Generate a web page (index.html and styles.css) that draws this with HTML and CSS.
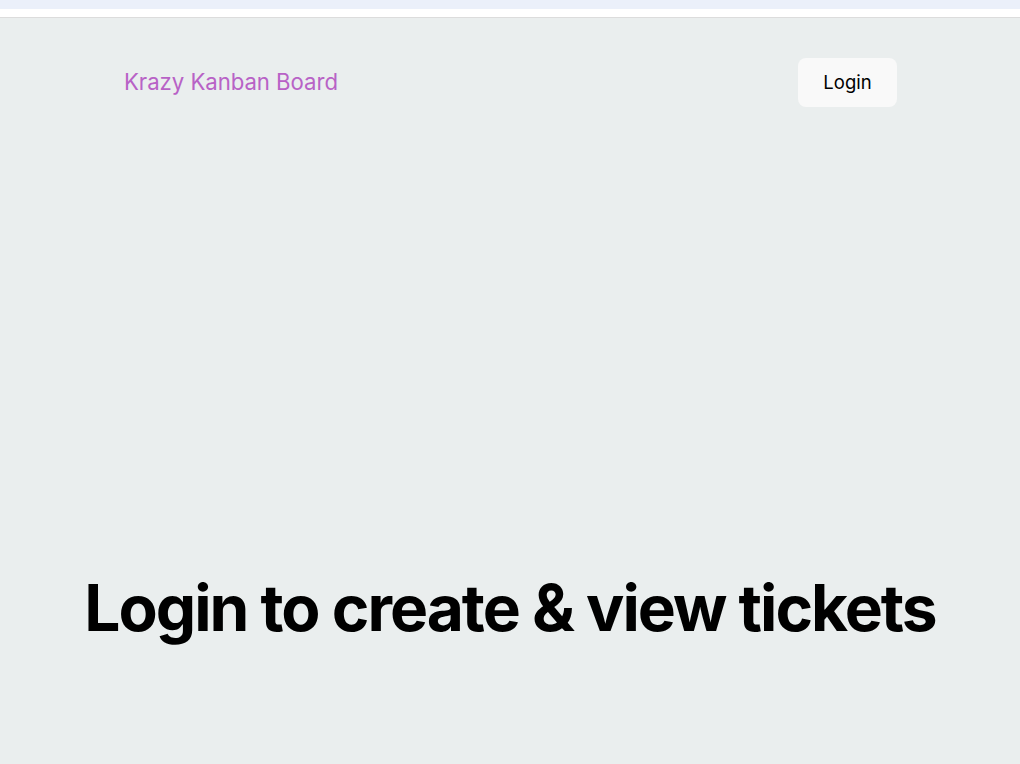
FILE: index.html
```html
<!DOCTYPE html>
<html lang="en">
<head>
<meta charset="utf-8">
<title>Krazy Kanban Board</title>
<link rel="stylesheet" href="styles.css">
</head>
<body>
<div class="topband"></div>
<div class="topwhite"></div>
<main class="page">
  <nav class="nav">
    <h1 class="brand">Krazy Kanban Board</h1>
    <button class="login-btn" type="button">Login</button>
  </nav>
  <section class="hero">
    <h2 class="hero-title">Login to create &amp; view tickets</h2>
  </section>
</main>
</body>
</html>
```

FILE: styles.css
```css
* { box-sizing: border-box; }
html, body { margin: 0; padding: 0; height: 100%; }
body {
  font-family: Inter, "Noto Sans", sans-serif;
  background: #eaeeee;
  display: flex;
  flex-direction: column;
}
.topband { height: 9px; background: #ebf0fa; }
.topwhite { height: 9px; background: #ffffff; border-bottom: 1px solid #dcdcdc; }
.page { flex: 1; display: flex; flex-direction: column; }
.nav {
  display: flex;
  justify-content: space-between;
  align-items: center;
  padding: 40px 123px 0 124px;
}
.brand {
  margin: 0 0 2px 0;
  font-size: 22.2px;
  font-weight: 400;
  color: #b862c6;
  letter-spacing: -0.05px;
}
.login-btn {
  font-family: inherit;
  font-size: 18.5px;
  color: #000;
  background: #f9f9f9;
  border: none;
  border-radius: 8px;
  width: 99px;
  height: 49px;
  padding: 0 0 1px 0;
}
.hero {
  display: flex;
  justify-content: center;
  padding-top: 462px;
}
.hero-title {
  margin: 0;
  font-size: 64px;
  font-weight: 700;
  letter-spacing: -2px;
  color: #000;
}
```
